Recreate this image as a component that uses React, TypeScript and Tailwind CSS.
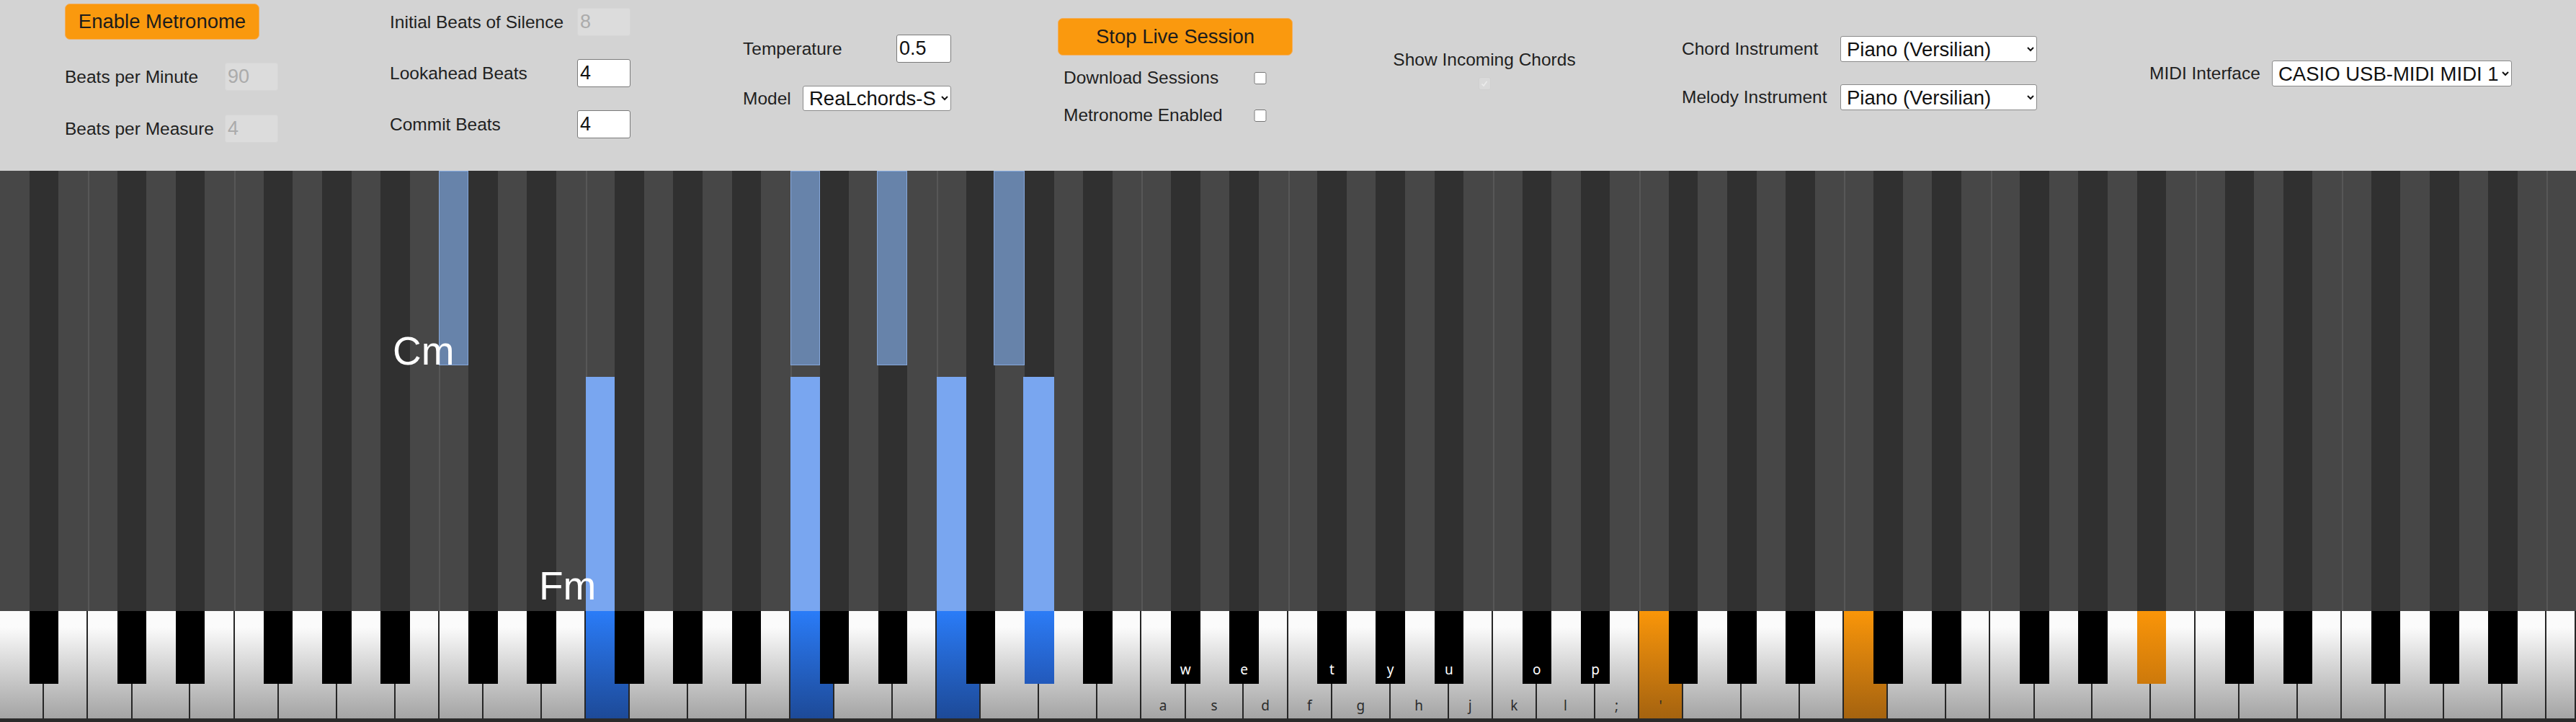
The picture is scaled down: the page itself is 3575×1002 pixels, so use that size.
import clsx from "clsx";

const KEYS = 88;
const BLACK_PCS = [1, 3, 6, 8, 10];
const cols = Array.from({ length: KEYS }, (_, i) => i);
const pc = (i: number) => (21 + i) % 12;
const isBlack = (i: number) => BLACK_PCS.includes(pc(i));

// piano-roll notes, column index = midi - 21
const incoming = [15, 27, 30, 34]; // Cm
const current = [20, 27, 32, 35]; // Fm
const blueKeys = [20, 27, 32, 35];
const orangeKeys = [56, 63, 73];

const keyLabels: Record<number, string> = {
  39: "a", 40: "w", 41: "s", 42: "e", 43: "d", 44: "f", 45: "t", 46: "g", 47: "y",
  48: "h", 49: "u", 50: "j", 51: "k", 52: "o", 53: "l", 54: "p", 55: ";", 56: "'",
};

const flexBySpan: Record<number, string> = { 2: "flex-[2]", 3: "flex-[3]", 4: "flex-[4]" };

const whiteKeys = cols
  .filter((i) => !isBlack(i))
  .map((i) => {
    let span = 2;
    if (i > 0 && isBlack(i - 1)) span += 1;
    if (i < KEYS - 1 && isBlack(i + 1)) span += 1;
    return { i, span };
  });

function NumBox({ value, disabled, w = "w-[74px]", h = "h-[39px]" }: { value: string; disabled?: boolean; w?: string; h?: string }) {
  return (
    <input
      defaultValue={value}
      disabled={disabled}
      className={clsx(
        w,
        h,
        "rounded-[3px] border px-[3px] text-[27px] outline-none",
        disabled ? "border-[#d6d6d6] bg-[#dcdcdc] text-[#ababab]" : "border-[#7a7a7a] bg-white text-[#111]"
      )}
    />
  );
}

function Select({ value, w, h = "h-[36px]" }: { value: string; w: string; h?: string }) {
  return (
    <select
      defaultValue={value}
      className={clsx(w, h, "rounded-[3px] border border-[#8a8a8a] bg-white pl-[4px] text-[27.5px] text-[#111] outline-none")}
    >
      <option>{value}</option>
    </select>
  );
}

function Check() {
  return <input type="checkbox" className="h-[17px] w-[18px] accent-white" />;
}

function Header() {
  return (
    <div className="flex h-[237px] items-start whitespace-nowrap bg-[#d3d3d3] pl-[90px] text-[24.5px] leading-[28px] text-[#1f1f1f]">
      <div className="mt-[5px] flex w-[296px] flex-col">
        <button className="h-[50px] w-[270px] rounded-[7px] border border-[#f3ad5c] bg-[#fa990e] text-[27.5px] text-[#1c1c1c]">
          Enable Metronome
        </button>
        <div className="mt-[32px] flex items-center justify-between">
          <span>Beats per Minute</span>
          <NumBox value="90" disabled />
        </div>
        <div className="mt-[33px] flex items-center justify-between">
          <span>Beats per Measure</span>
          <NumBox value="4" disabled />
        </div>
      </div>

      <div className="ml-[155px] mt-[11px] flex w-[334px] flex-col gap-[32px]">
        <div className="flex items-center justify-between">
          <span>Initial Beats of Silence</span>
          <NumBox value="8" disabled />
        </div>
        <div className="flex items-center justify-between">
          <span>Lookahead Beats</span>
          <NumBox value="4" />
        </div>
        <div className="flex items-center justify-between">
          <span>Commit Beats</span>
          <NumBox value="4" />
        </div>
      </div>

      <div className="ml-[156px] mt-[48px] flex w-[289px] flex-col gap-[32px]">
        <div className="flex items-center justify-between">
          <span>Temperature</span>
          <NumBox value="0.5" w="w-[76px]" />
        </div>
        <div className="flex items-center justify-between">
          <span>Model</span>
          <Select value="ReaLchords-S" w="w-[206px]" h="h-[35px]" />
        </div>
      </div>

      <div className="ml-[148px] mt-[25px] flex w-[326px] flex-col">
        <button className="h-[52px] w-full rounded-[7px] border border-[#f3ad5c] bg-[#fa990e] text-[27.5px] text-[#1c1c1c]">
          Stop Live Session
        </button>
        <div className="mt-[18px] flex h-[26px] items-center justify-between pl-[8px] pr-[36px]">
          <span>Download Sessions</span>
          <Check />
        </div>
        <div className="mt-[26px] flex h-[26px] items-center justify-between pl-[8px] pr-[36px]">
          <span>Metronome Enabled</span>
          <Check />
        </div>
      </div>

      <div className="ml-[140px] mt-[69px] flex w-[252px] flex-col items-center">
        <span>Show Incoming Chords</span>
        <div className="mt-[10px] flex h-[18px] w-[17px] items-center justify-center rounded-[3px] border border-[#d0d0d0] bg-[#dadada]">
          <svg viewBox="0 0 12 12" className="h-[12px] w-[12px]">
            <path d="M2.5 6.5 L5 9 L9.5 3" fill="none" stroke="#ececec" strokeWidth="1.6" />
          </svg>
        </div>
      </div>

      <div className="ml-[148px] mt-[50px] flex w-[493px] flex-col gap-[31px]">
        <div className="flex items-center justify-between">
          <span>Chord Instrument</span>
          <Select value="Piano (Versilian)" w="w-[273px]" />
        </div>
        <div className="flex items-center justify-between">
          <span>Melody Instrument</span>
          <Select value="Piano (Versilian)" w="w-[273px]" />
        </div>
      </div>

      <div className="ml-[156px] mt-[84px] flex w-[503px] items-center justify-between">
        <span>MIDI Interface</span>
        <Select value="CASIO USB-MIDI MIDI 1" w="w-[333px]" />
      </div>
    </div>
  );
}

function Roll() {
  return (
    <div className="relative grid h-[611px] grid-cols-[repeat(88,minmax(0,1fr))]">
      {cols.map((i) => (
        <div
          key={i}
          className={clsx(
            "relative",
            isBlack(i) ? "bg-[#303030]" : "bg-[#474747]",
            (pc(i) === 0 || pc(i) === 5) && "border-l-2 border-[#575757]"
          )}
        >
          {incoming.includes(i) && (
            <div className="absolute -left-[2px] right-0 top-0 h-[270px] border border-[#86a8dc] bg-[#6783aa]" />
          )}
          {current.includes(i) && <div className="absolute -left-[2px] right-0 bottom-0 top-[286px] bg-[#79a6f0]" />}
        </div>
      ))}
      <span className="absolute left-[545px] top-[223px] text-[55px] leading-none text-white">Cm</span>
      <span className="absolute left-[748px] top-[549px] text-[55px] leading-none text-white">Fm</span>
    </div>
  );
}

function Keyboard() {
  return (
    <div className="relative flex h-[149px] font-['Noto_Sans',sans-serif] text-[19px]">
      {whiteKeys.map(({ i, span }) => (
        <div
          key={i}
          className={clsx(
            flexBySpan[span],
            "relative min-w-0 border-r-2 border-[#262626] bg-linear-to-b",
            blueKeys.includes(i)
              ? "from-[#2a7cf8] to-[#1d4a98]"
              : orangeKeys.includes(i)
                ? "from-[#fa9608] to-[#a5630f]"
                : "from-[#fbfbfb] from-15% to-[#a4a4a4]"
          )}
        >
          {keyLabels[i] && (
            <span className="absolute inset-x-0 bottom-[4px] text-center text-[#2b2b2b]">{keyLabels[i]}</span>
          )}
        </div>
      ))}
      <div className="pointer-events-none absolute inset-x-0 top-0 grid h-[101px] grid-cols-[repeat(88,minmax(0,1fr))]">
        {cols.map((i) =>
          isBlack(i) ? (
            <div
              key={i}
              className={clsx(
                "relative",
                blueKeys.includes(i)
                  ? "bg-linear-to-b from-[#2c7cf6] to-[#2259bb]"
                  : orangeKeys.includes(i)
                    ? "bg-linear-to-b from-[#fa9508] to-[#cd790b]"
                    : "bg-black"
              )}
            >
              {keyLabels[i] && (
                <span className="absolute inset-x-0 bottom-[6px] text-center text-white">{keyLabels[i]}</span>
              )}
            </div>
          ) : (
            <div key={i} />
          )
        )}
      </div>
    </div>
  );
}

export default function App() {
  return (
    <div className="w-[3575px] overflow-hidden font-['Liberation_Sans',Arial,sans-serif]">
      <Header />
      <Roll />
      <Keyboard />
      <div className="h-[5px] bg-[#2a2a2a]" />
    </div>
  );
}
